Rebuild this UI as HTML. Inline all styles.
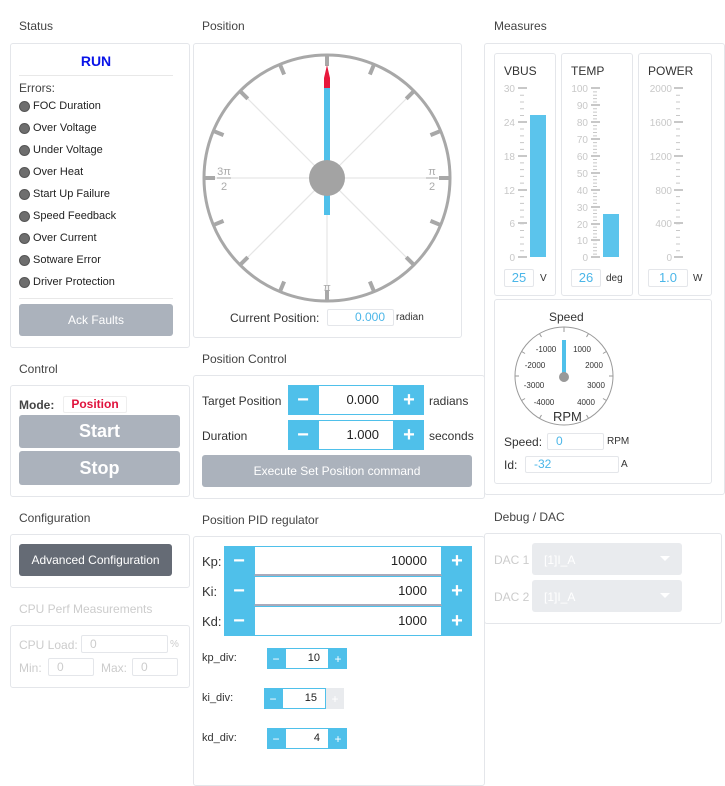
<!DOCTYPE html>
<html><head><meta charset="utf-8"><style>
*{box-sizing:border-box;margin:0;padding:0}
body{width:725px;height:767px;background:#fff;font-family:"Liberation Sans",sans-serif;font-size:12px;color:#333;position:relative;overflow:hidden}
.a{position:absolute}
.t{position:absolute;font-size:12px;color:#444}
.p{position:absolute;border:1px solid #e4e6ea;border-radius:3px;background:#fff}
.dot{position:absolute;left:19px;width:11px;height:11px;border-radius:50%;background:#6e6e6e;border:1px solid #555}
.err{position:absolute;left:33px;font-size:11px;color:#222}
.btn{position:absolute;border-radius:3px;background:#abb2bc;color:#fff;text-align:center}
.inp{position:absolute;border:1px solid #e4e6ea;border-radius:2px;background:#fff;color:#4bb6e8;text-align:center}
.bl{position:absolute;background:#4fc0ea;color:#fff;display:flex;align-items:center;justify-content:center;font-size:20px;font-weight:bold}
.bl.s{font-size:12px;font-weight:normal}
</style></head><body>

<div class="t" style="left:19px;top:19px">Status</div>
<div class="p" style="left:10px;top:43px;width:180px;height:305px"></div>
<div class="a" style="left:19px;top:53px;width:154px;text-align:center;color:#0a14e8;font-weight:bold;font-size:14px">RUN</div>
<div class="a" style="left:19px;top:75px;width:154px;height:1px;background:#e8e8e8"></div>
<div class="a" style="left:19px;top:81px;color:#444">Errors:</div>
<div class="dot" style="top:101px"></div><div class="err" style="top:100px">FOC Duration</div>
<div class="dot" style="top:123px"></div><div class="err" style="top:122px">Over Voltage</div>
<div class="dot" style="top:145px"></div><div class="err" style="top:144px">Under Voltage</div>
<div class="dot" style="top:167px"></div><div class="err" style="top:166px">Over Heat</div>
<div class="dot" style="top:189px"></div><div class="err" style="top:188px">Start Up Failure</div>
<div class="dot" style="top:211px"></div><div class="err" style="top:210px">Speed Feedback</div>
<div class="dot" style="top:233px"></div><div class="err" style="top:232px">Over Current</div>
<div class="dot" style="top:255px"></div><div class="err" style="top:254px">Sotware Error</div>
<div class="dot" style="top:277px"></div><div class="err" style="top:276px">Driver Protection</div>
<div class="a" style="left:19px;top:298px;width:154px;height:1px;background:#e8e8e8"></div>
<div class="btn" style="left:19px;top:304px;width:154px;height:32px;line-height:32px;font-size:12px">Ack Faults</div>

<div class="t" style="left:202px;top:19px">Position</div>
<div class="p" style="left:193px;top:43px;width:269px;height:295px"></div>
<svg class="a" style="left:193px;top:43px" width="269" height="295">
<g transform="translate(134,135)">
<g stroke="#e6e6e6" stroke-width="1.2">
<line x1="-122" y1="0" x2="122" y2="0"/><line x1="0" y1="-122" x2="0" y2="122"/>
<line x1="-86" y1="-86" x2="86" y2="86"/><line x1="86" y1="-86" x2="-86" y2="86"/>
</g>
<circle r="123" fill="none" stroke="#a8a8a8" stroke-width="3"/>
<g stroke="#a8a8a8" stroke-width="4">
<line x1="0" y1="-123" x2="0" y2="-112"/><line x1="0" y1="123" x2="0" y2="112"/>
<line x1="-123" y1="0" x2="-112" y2="0"/><line x1="123" y1="0" x2="112" y2="0"/>
<g transform="rotate(22.5)"><line x1="0" y1="-123" x2="0" y2="-112"/></g>
<g transform="rotate(45)"><line x1="0" y1="-123" x2="0" y2="-112"/></g>
<g transform="rotate(67.5)"><line x1="0" y1="-123" x2="0" y2="-112"/></g>
<g transform="rotate(112.5)"><line x1="0" y1="-123" x2="0" y2="-112"/></g>
<g transform="rotate(135)"><line x1="0" y1="-123" x2="0" y2="-112"/></g>
<g transform="rotate(157.5)"><line x1="0" y1="-123" x2="0" y2="-112"/></g>
<g transform="rotate(202.5)"><line x1="0" y1="-123" x2="0" y2="-112"/></g>
<g transform="rotate(225)"><line x1="0" y1="-123" x2="0" y2="-112"/></g>
<g transform="rotate(247.5)"><line x1="0" y1="-123" x2="0" y2="-112"/></g>
<g transform="rotate(292.5)"><line x1="0" y1="-123" x2="0" y2="-112"/></g>
<g transform="rotate(315)"><line x1="0" y1="-123" x2="0" y2="-112"/></g>
<g transform="rotate(337.5)"><line x1="0" y1="-123" x2="0" y2="-112"/></g>
</g>
<g fill="#aaa" font-size="11" text-anchor="middle" font-family="Liberation Sans">
<text x="-103" y="-3">3π</text><line x1="-110" y1="0" x2="-96" y2="0" stroke="#aaa"/><text x="-103" y="12">2</text>
<text x="105" y="-3">π</text><line x1="99" y1="0" x2="111" y2="0" stroke="#aaa"/><text x="105" y="12">2</text>
<text x="0" y="113">π</text>
</g>
<rect x="-3" y="-48" width="6" height="85" fill="#4fc0ea"/>
<polygon points="0,-113 -3,-100 -3,-90 3,-90 3,-100" fill="#e8183c"/>
<rect x="-3" y="-90" width="6" height="44" fill="#4fc0ea"/>
<circle r="18" fill="#a3a3a3"/>
</g></svg>
<div class="a" style="left:230px;top:311px;color:#333">Current Position:</div>
<div class="inp" style="left:327px;top:309px;width:67px;height:17px;line-height:15px;text-align:right;padding-right:8px">0.000</div>
<div class="a" style="left:396px;top:312px;font-size:10px">radian</div>

<div class="t" style="left:494px;top:19px">Measures</div>
<div class="p" style="left:484px;top:43px;width:241px;height:452px"></div>
<div class="p" style="left:494px;top:53px;width:62px;height:243px"></div>
<div class="p" style="left:561px;top:53px;width:72px;height:243px"></div>
<div class="p" style="left:638px;top:53px;width:74px;height:243px"></div>
<div class="a" style="left:504px;top:64px">VBUS</div>
<div class="a" style="left:571px;top:64px">TEMP</div>
<div class="a" style="left:648px;top:64px">POWER</div>
<svg class="a" style="left:494px;top:80px" width="220" height="185">
<g font-size="10" fill="#c8c8c8" text-anchor="end" font-family="Liberation Sans">
<text x="21" y="12">30</text><text x="21" y="46">24</text><text x="21" y="80">18</text><text x="21" y="114">12</text><text x="21" y="147">6</text><text x="21" y="181">0</text>
<text x="94" y="12">100</text><text x="94" y="29">90</text><text x="94" y="46">80</text><text x="94" y="63">70</text><text x="94" y="80">60</text><text x="94" y="97">50</text><text x="94" y="114">40</text><text x="94" y="131">30</text><text x="94" y="148">20</text><text x="94" y="164">10</text><text x="94" y="181">0</text>
<text x="178" y="12">2000</text><text x="178" y="46">1600</text><text x="178" y="80">1200</text><text x="178" y="114">800</text><text x="178" y="147">400</text><text x="178" y="181">0</text>
</g>
<g stroke="#c8c8c8">
<line x1="28" y1="8" x2="28" y2="178" stroke-width="4" stroke-dasharray="1 5.76"/>
<line x1="101" y1="8" x2="101" y2="178" stroke-width="4" stroke-dasharray="1 2.38"/>
<line x1="184" y1="8" x2="184" y2="178" stroke-width="4" stroke-dasharray="1 5.76"/>
<g stroke-width="2">
<path d="M24 8h9M24 42h9M24 76h9M24 110h9M24 143h9M24 177h9"/>
<path d="M97 8h9M97 25h9M97 42h9M97 59h9M97 76h9M97 93h9M97 110h9M97 127h9M97 144h9M97 160h9M97 177h9"/>
<path d="M180 8h9M180 42h9M180 76h9M180 110h9M180 143h9M180 177h9"/>
</g></g>
<rect x="36" y="35" width="16" height="142" fill="#5bc4ec"/>
<rect x="109" y="134" width="16" height="43" fill="#5bc4ec"/>
</svg>
<div class="inp" style="left:504px;top:269px;width:30px;height:18px;line-height:16px;font-size:13px">25</div><div class="a" style="left:540px;top:273px;font-size:10px">V</div>
<div class="inp" style="left:571px;top:269px;width:30px;height:18px;line-height:16px;font-size:13px">26</div><div class="a" style="left:606px;top:273px;font-size:10px">deg</div>
<div class="inp" style="left:648px;top:269px;width:40px;height:18px;line-height:16px;font-size:13px">1.0</div><div class="a" style="left:693px;top:273px;font-size:10px">W</div>

<div class="p" style="left:494px;top:299px;width:218px;height:185px"></div>
<div class="a" style="left:549px;top:310px">Speed</div>
<svg class="a" style="left:510px;top:325px" width="110" height="105">
<g transform="translate(54,51)">
<circle r="49" fill="none" stroke="#9a9a9a" stroke-width="1"/>
<g stroke="#9a9a9a"><line y1="-49" y2="-44"/><g transform="rotate(30)"><line y1="-49" y2="-45"/></g><g transform="rotate(60)"><line y1="-49" y2="-45"/></g><g transform="rotate(90)"><line y1="-49" y2="-45"/></g><g transform="rotate(120)"><line y1="-49" y2="-45"/></g><g transform="rotate(150)"><line y1="-49" y2="-45"/></g><g transform="rotate(-30)"><line y1="-49" y2="-45"/></g><g transform="rotate(-60)"><line y1="-49" y2="-45"/></g><g transform="rotate(-90)"><line y1="-49" y2="-45"/></g><g transform="rotate(-120)"><line y1="-49" y2="-45"/></g><g transform="rotate(-150)"><line y1="-49" y2="-45"/></g></g>
<g font-size="8" fill="#333" text-anchor="middle" font-family="Liberation Sans">
<text x="-18" y="-24">-1000</text><text x="18" y="-24">1000</text>
<text x="-29" y="-8">-2000</text><text x="30" y="-8">2000</text>
<text x="-30" y="12">-3000</text><text x="32" y="12">3000</text>
<text x="-20" y="29">-4000</text><text x="22" y="29">4000</text>
</g>
<rect x="-2" y="-36" width="4" height="36" fill="#4fc0ea"/>
<circle r="5" cy="1" fill="#999"/>
</g></svg>
<div class="a" style="left:553px;top:409px;font-size:13px">RPM</div>
<div class="a" style="left:504px;top:435px">Speed:</div>
<div class="inp" style="left:547px;top:433px;width:57px;height:17px;line-height:15px;text-align:left;padding-left:8px">0</div>
<div class="a" style="left:607px;top:436px;font-size:10px">RPM</div>
<div class="a" style="left:504px;top:458px">Id:</div>
<div class="inp" style="left:525px;top:456px;width:94px;height:17px;line-height:15px;text-align:left;padding-left:8px">-32</div>
<div class="a" style="left:621px;top:459px;font-size:10px">A</div>

<div class="t" style="left:494px;top:510px">Debug / DAC</div>
<div class="p" style="left:484px;top:533px;width:238px;height:91px"></div>
<div class="a" style="left:494px;top:553px;color:#ccc">DAC 1</div>
<div class="a" style="left:532px;top:543px;width:150px;height:32px;background:#e9ebee;border-radius:3px;color:#fff;padding:10px 0 0 12px">[1]I_A</div>
<div class="a" style="left:494px;top:590px;color:#ccc">DAC 2</div>
<div class="a" style="left:532px;top:580px;width:150px;height:32px;background:#e9ebee;border-radius:3px;color:#fff;padding:10px 0 0 12px">[1]I_A</div>
<svg class="a" style="left:660px;top:556px" width="12" height="50"><path d="M0 0h10l-5 5z M0 37h10l-5 5z" fill="#fff"/></svg>

<div class="t" style="left:19px;top:362px">Control</div>
<div class="p" style="left:10px;top:385px;width:180px;height:112px"></div>
<div class="a" style="left:19px;top:398px;font-weight:bold;color:#444">Mode:</div>
<div class="a" style="left:63px;top:396px;width:64px;height:17px;border:1px solid #eee;border-radius:2px;color:#e0123c;font-weight:bold;text-align:center;line-height:15px">Position</div>
<div class="btn" style="left:19px;top:415px;width:161px;height:33px;line-height:33px;font-size:18px;font-weight:bold">Start</div>
<div class="btn" style="left:19px;top:451px;width:161px;height:34px;line-height:34px;font-size:18px;font-weight:bold">Stop</div>

<div class="t" style="left:19px;top:511px">Configuration</div>
<div class="p" style="left:10px;top:534px;width:180px;height:54px"></div>
<div class="btn" style="left:19px;top:544px;width:153px;height:32px;line-height:32px;background:#656b75">Advanced Configuration</div>

<div class="t" style="left:19px;top:602px;color:#ccc">CPU Perf Measurements</div>
<div class="p" style="left:10px;top:625px;width:180px;height:63px"></div>
<div class="a" style="left:19px;top:638px;color:#ccc">CPU Load:</div>
<div class="inp" style="left:81px;top:635px;width:87px;height:18px;color:#ccc;text-align:left;padding-left:8px;line-height:16px">0</div>
<div class="a" style="left:170px;top:639px;color:#ccc;font-size:10px">%</div>
<div class="a" style="left:19px;top:661px;color:#ccc">Min:</div>
<div class="inp" style="left:48px;top:658px;width:46px;height:18px;color:#ccc;text-align:left;padding-left:8px;line-height:16px">0</div>
<div class="a" style="left:101px;top:661px;color:#ccc">Max:</div>
<div class="inp" style="left:132px;top:658px;width:46px;height:18px;color:#ccc;text-align:left;padding-left:8px;line-height:16px">0</div>

<div class="t" style="left:202px;top:352px">Position Control</div>
<div class="p" style="left:193px;top:375px;width:292px;height:124px"></div>
<div class="a" style="left:202px;top:394px">Target Position</div>
<div class="bl" style="left:288px;top:385px;width:30px;height:30px">−</div>
<div class="a" style="left:318px;top:385px;width:76px;height:30px;border:1px solid #4fc0ea;text-align:right;padding-right:14px;line-height:28px;font-size:13px;color:#222">0.000</div>
<div class="bl" style="left:394px;top:385px;width:30px;height:30px">+</div>
<div class="a" style="left:429px;top:394px">radians</div>
<div class="a" style="left:202px;top:429px">Duration</div>
<div class="bl" style="left:288px;top:420px;width:30px;height:30px">−</div>
<div class="a" style="left:318px;top:420px;width:76px;height:30px;border:1px solid #4fc0ea;text-align:right;padding-right:14px;line-height:28px;font-size:13px;color:#222">1.000</div>
<div class="bl" style="left:394px;top:420px;width:30px;height:30px">+</div>
<div class="a" style="left:429px;top:429px">seconds</div>
<div class="btn" style="left:202px;top:455px;width:270px;height:32px;line-height:32px">Execute Set Position command</div>

<div class="t" style="left:202px;top:513px">Position PID regulator</div>
<div class="p" style="left:193px;top:536px;width:292px;height:250px"></div>
<div class="a" style="left:202px;top:554px;font-size:13px">Kp:</div>
<div class="a" style="left:202px;top:584px;font-size:13px">Ki:</div>
<div class="a" style="left:202px;top:614px;font-size:13px">Kd:</div>
<div class="bl" style="left:224px;top:546px;width:30px;height:30px">−</div>
<div class="bl" style="left:224px;top:576px;width:30px;height:30px">−</div>
<div class="bl" style="left:224px;top:606px;width:30px;height:30px">−</div>
<div class="a" style="left:254px;top:546px;width:188px;height:30px;border:1px solid #4fc0ea;border-bottom:2px solid #aab;text-align:right;padding-right:14px;line-height:28px;font-size:13px;color:#222">10000</div>
<div class="a" style="left:254px;top:576px;width:188px;height:30px;border:1px solid #4fc0ea;border-bottom:2px solid #aab;text-align:right;padding-right:14px;line-height:28px;font-size:13px;color:#222">1000</div>
<div class="a" style="left:254px;top:606px;width:188px;height:30px;border:1px solid #4fc0ea;text-align:right;padding-right:14px;line-height:28px;font-size:13px;color:#222">1000</div>
<div class="bl" style="left:442px;top:546px;width:30px;height:30px">+</div>
<div class="bl" style="left:442px;top:576px;width:30px;height:30px">+</div>
<div class="bl" style="left:442px;top:606px;width:30px;height:30px">+</div>

<div class="a" style="left:202px;top:652px;font-size:11px">kp_div:</div>
<div class="bl s" style="left:267px;top:648px;width:18px;height:21px">−</div>
<div class="a" style="left:285px;top:648px;width:44px;height:21px;border:1px solid #4fc0ea;text-align:right;padding-right:8px;line-height:19px;font-size:11px;color:#222">10</div>
<div class="bl s" style="left:329px;top:648px;width:18px;height:21px">+</div>
<div class="a" style="left:202px;top:692px;font-size:11px">ki_div:</div>
<div class="bl s" style="left:264px;top:688px;width:18px;height:21px">−</div>
<div class="a" style="left:282px;top:688px;width:44px;height:21px;border:1px solid #4fc0ea;text-align:right;padding-right:8px;line-height:19px;font-size:11px;color:#222">15</div>
<div class="bl s" style="left:326px;top:688px;width:18px;height:21px;background:#e9ebee">+</div>
<div class="a" style="left:202px;top:732px;font-size:11px">kd_div:</div>
<div class="bl s" style="left:267px;top:728px;width:18px;height:21px">−</div>
<div class="a" style="left:285px;top:728px;width:44px;height:21px;border:1px solid #4fc0ea;text-align:right;padding-right:8px;line-height:19px;font-size:11px;color:#222">4</div>
<div class="bl s" style="left:329px;top:728px;width:18px;height:21px">+</div>
</body></html>
